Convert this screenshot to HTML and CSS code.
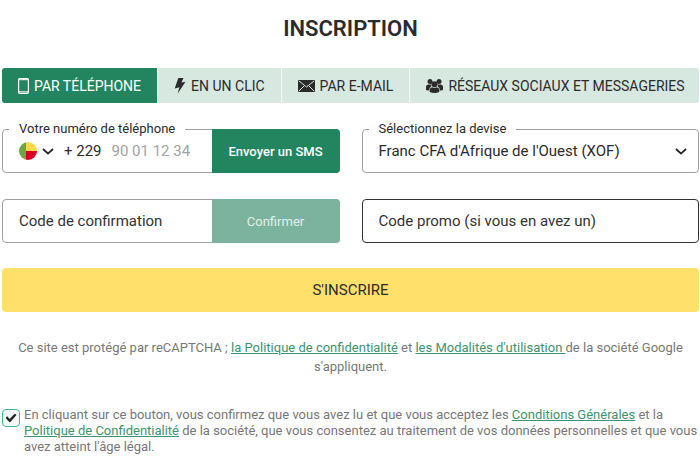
FILE: index.html
```
<!DOCTYPE html>
<html lang="fr">
<head>
	<meta charset="utf-8">
	<meta name="viewport" content="width=device-width, initial-scale=1.0">
	<title>Inscription</title>
	<link rel="stylesheet" href="styles.css">
</head>
<body>
	<main class="registration">
		<h1>INSCRIPTION</h1>

		<nav class="tabs">
			<button type="button" class="tab active">
				<svg width="11" height="16" viewBox="0 0 11 16" fill="none" stroke="currentColor"><rect x=".6" y=".6" width="9.8" height="14.8" rx="1.2" stroke-width="1.2"/><path d="M1 1.7h9M1 13.8h9" stroke-width="1"/></svg>
				PAR TÉLÉPHONE
			</button>
			<button type="button" class="tab">
				<svg width="12" height="16" viewBox="0 0 12 16" fill="currentColor"><path d="M4.3 0h5.2L7.4 4.6l4.1-.8-7.9 12 1.8-6.6L.7 10.4z"/></svg>
				EN UN CLIC
			</button>
			<button type="button" class="tab">
				<svg width="17" height="12" viewBox="0 0 17 12"><rect width="17" height="12" rx="1" fill="currentColor"/><path d="M1 1l7.5 6L16 1M1 11l5-5M16 11l-5-5" fill="none" stroke="#d6e8e0"/></svg>
				PAR E-MAIL
			</button>
			<button type="button" class="tab">
				<svg width="17" height="14" viewBox="0 0 17 14" fill="currentColor"><circle cx="4" cy="2.6" r="2.5"/><circle cx="13" cy="2.6" r="2.5"/><path d="M0 11V8q0-2.6 2.6-2.6h2.6v2.2Q3.2 8.6 3.1 11.4 1 11.6 0 11zM17 11V8q0-2.6-2.6-2.6h-2.6v2.2q2 1 2.1 3.8 2.1.2 3.1-.4z"/><circle cx="8.5" cy="5.2" r="3"/><path d="M3.7 13v-1.8q0-2.6 2.4-2.9 2.4 1.5 4.8 0 2.4.3 2.4 2.9V13q-4.8 1.8-9.6 0z"/></svg>
				RÉSEAUX SOCIAUX ET MESSAGERIES
			</button>
		</nav>

		<form>
			<div class="fields">
				<div class="field">
					<label class="caption" for="phone">Votre numéro de téléphone</label>
					<button type="button" class="country" aria-label="Pays">
						<svg width="18" height="18" viewBox="0 0 18 18"><clipPath id="round"><circle cx="9" cy="9" r="9"/></clipPath><g clip-path="url(#round)"><path fill="#6da544" d="M0 0h7v18H0z"/><path fill="#ffda44" d="M7 0h11v9H7z"/><path fill="#d80027" d="M7 9h11v9H7z"/></g></svg>
						<svg width="12" height="7" viewBox="0 0 12 7" fill="none" stroke="#222" stroke-width="1.8"><path d="M1 1l5 4.6L11 1"/></svg>
					</button>
					<span class="prefix">+ 229</span>
					<input type="tel" id="phone" placeholder="90 01 12 34">
					<button type="button" class="action">Envoyer un SMS</button>
				</div>
				<div class="field">
					<label class="caption" for="currency">Sélectionnez la devise</label>
					<select id="currency">
						<option>Franc CFA d'Afrique de l'Ouest (XOF)</option>
					</select>
					<svg class="arrow" width="12" height="7" viewBox="0 0 12 7" fill="none" stroke="#222" stroke-width="1.8"><path d="M1 1l5 4.6L11 1"/></svg>
				</div>
				<div class="field">
					<input type="text" class="code" placeholder="Code de confirmation" aria-label="Code de confirmation">
					<button type="button" class="action disabled">Confirmer</button>
				</div>
				<div class="field dark">
					<input type="text" class="code" placeholder="Code promo (si vous en avez un)" aria-label="Code promo">
				</div>
			</div>

			<button type="button" class="submit">S'INSCRIRE</button>

			<p class="recaptcha">Ce site est protégé par reCAPTCHA ; <a href="#">la Politique de confidentialité</a> et <a href="#">les Modalités d'utilisation </a>de la société Google s'appliquent.</p>

			<div class="consent">
				<input type="checkbox" id="agree" checked>
				<label for="agree">En cliquant sur ce bouton, vous confirmez que vous avez lu et que vous acceptez les <a href="#">Conditions Générales</a> et la <a href="#">Politique de Confidentialité</a> de la société, que vous consentez au traitement de vos données personnelles et que vous avez atteint l'âge légal.</label>
			</div>
		</form>
	</main>
</body>
</html>
```
FILE: styles.css
```
* {
	box-sizing: border-box;
}
body {
	margin: 0;
	background: #fff;
	color: #2b2b2b;
	font-family: Roboto, "Liberation Sans", sans-serif;
	font-size: 15px;
}
button, input, select {
	font: inherit;
	color: inherit;
	margin: 0;
	padding: 0;
	border: none;
	background: none;
}
button {
	cursor: pointer;
}
svg {
	flex: none;
}
.registration {
	padding: 15px 1px 0 2px;
}
h1 {
	margin: 0 0 25px;
	font-size: 22px;
	line-height: 28px;
	font-weight: 600;
	text-align: center;
}
.tabs {
	display: flex;
	gap: 1px;
	margin-bottom: 26px;
	border-radius: 3px;
	overflow: hidden;
}
.tab {
	display: flex;
	align-items: center;
	gap: 5px;
	height: 35px;
	padding: 0 16px;
	background: #d6e8e0;
	font-size: 14px;
	white-space: nowrap;
}
.tab:last-child {
	flex: 1;
}
.tab.active {
	background: #23855f;
	color: #fff;
}
.fields {
	display: grid;
	grid-template-columns: minmax(0, 1fr) minmax(0, 1fr);
	gap: 26px 22px;
}
.field {
	position: relative;
	display: flex;
	align-items: center;
	height: 44px;
	border: 1px solid #a0a0a0;
	border-radius: 4px;
}
.field.dark {
	border-color: #333;
}
.caption {
	position: absolute;
	top: -9px;
	left: 6px;
	padding: 0 10px;
	background: #fff;
	font-size: 13px;
	line-height: 16px;
}
.country {
	display: flex;
	align-items: center;
	gap: 5px;
	padding-left: 16px;
}
.prefix {
	margin: 0 10px;
}
.field input {
	flex: 1;
	min-width: 0;
	height: 100%;
	outline: none;
}
.field input::placeholder {
	color: #a2a2a2;
	opacity: 1;
}
.field .code {
	padding-left: 16px;
}
.field .code::placeholder {
	color: #333;
}
.field select {
	flex: 1;
	height: 100%;
	padding: 0 30px 0 16px;
	appearance: none;
}
.arrow {
	position: absolute;
	right: 11px;
	pointer-events: none;
}
.action {
	width: 128px;
	align-self: stretch;
	margin: -1px;
	border-radius: 0 4px 4px 0;
	background: #23855f;
	color: #fff;
	font-size: 13px;
	font-weight: 500;
}
.action.disabled {
	background: #7bb39e;
	color: #e0f0e9;
	font-weight: 400;
}
.submit {
	display: block;
	width: 100%;
	height: 44px;
	margin: 25px 0 26px;
	border-radius: 4px;
	background: #ffe06a;
}
a {
	color: #3d9270;
	text-decoration: underline;
}
.recaptcha {
	margin: 0 0 31px;
	padding: 0 16px;
	color: #777;
	font-size: 13px;
	line-height: 19px;
	text-align: center;
}
.consent {
	display: flex;
	align-items: flex-start;
	gap: 4px;
	color: #777;
	font-size: 13px;
	line-height: 16px;
}
.consent input {
	flex: none;
	width: 18px;
	height: 18px;
	margin: 2px 0 0;
	appearance: none;
	border: 1px solid #3fb88a;
	border-radius: 4px;
	background: #f4f8f6;
	display: grid;
	place-items: center;
}
.consent input:checked::before {
	content: "";
	width: 11px;
	height: 9px;
	background: #222;
	clip-path: polygon(0 50%, 15% 30%, 38% 62%, 85% 0, 100% 17%, 40% 100%);
}
```
